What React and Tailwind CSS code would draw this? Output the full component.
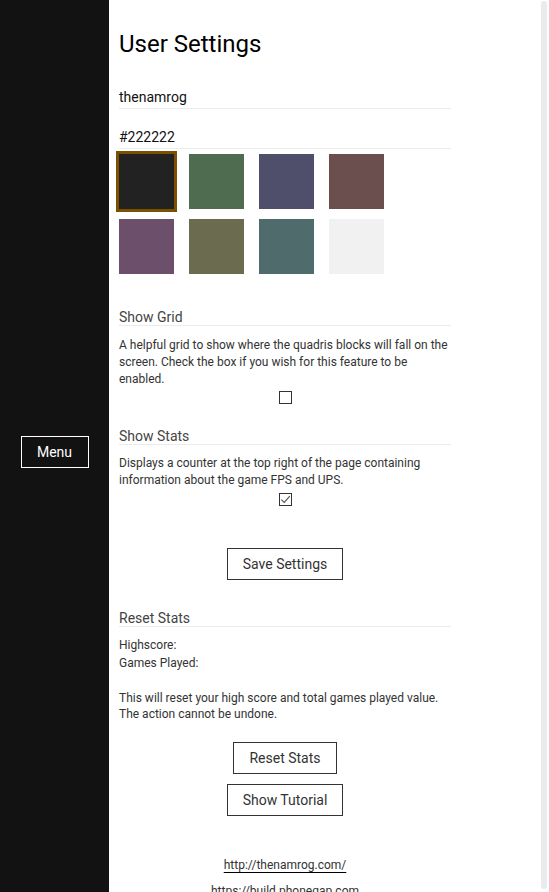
import React from "react";

const swatches = [
  "#222222", "#4f6b50", "#4f4f6b", "#6b4f4f",
  "#6b4f6b", "#6b6b4f", "#4f6b6b", "#f1f1f1",
];

function Heading({ children, className = "" }) {
  return (
    <div className={"text-[14px] leading-[17px] text-[#444] border-b border-[#ebebeb] " + className}>
      <span className="relative top-[1px]">{children}</span>
    </div>
  );
}

function Button({ children, className = "" }) {
  return (
    <button className={"h-[32px] px-[15px] border border-[#333] bg-white text-[14px] leading-[17px] text-[#333] " + className}>
      {children}
    </button>
  );
}

export default function App() {
  return (
    <div className="relative flex h-[892px] w-full overflow-hidden bg-white" style={{ fontFamily: "Roboto, 'Liberation Sans', sans-serif" }}>
      <aside className="w-[109px] shrink-0 bg-[#121212] flex items-center justify-center">
        <button className="mt-[12px] w-[68px] h-[32px] border border-white text-white text-[14px] leading-[17px]">
          Menu
        </button>
      </aside>

      <main className="ml-[10px] w-[332px] flex flex-col">
        <h1 className="mt-[30px] text-[24px] leading-[28px] text-black font-normal">User Settings</h1>

        <div className="mt-[30px] text-[14px] leading-[17px] text-[#111] pb-[3px] border-b border-[#ebebeb]">
          <span className="relative top-[1px]">thenamrog</span>
        </div>
        <div className="mt-[19px] text-[14px] leading-[17px] text-[#111] pb-[3px] border-b border-[#ebebeb]">
          <span className="relative top-[1px]">#222222</span>
        </div>

        <div className="mt-[5px] grid grid-cols-[repeat(4,55px)] gap-x-[15px] gap-y-[10px]">
          {swatches.map((c, i) => (
            <div
              key={c}
              className={"w-[55px] h-[55px] " + (i === 0 ? "shadow-[0_0_0_3px_#7b5000]" : "")}
              style={{ backgroundColor: c }}
            />
          ))}
        </div>

        <Heading className="mt-[34px]">Show Grid</Heading>
        <p className="relative top-[1px] mt-[10px] text-[12px] leading-[17px] text-[#333]">
          A helpful grid to show where the quadris blocks will fall on the screen. Check the box if you wish for this feature to be enabled.
        </p>
        <div className="mt-[4px] flex justify-center">
          <div className="w-[13px] h-[13px] border border-[#333] bg-white" />
        </div>

        <Heading className="mt-[23px]">Show Stats</Heading>
        <p className="mt-[10px] text-[12px] leading-[17px] text-[#333]">
          Displays a counter at the top right of the page containing information about the game FPS and UPS.
        </p>
        <div className="mt-[4px] flex justify-center">
          <div className="w-[13px] h-[13px] border border-[#333] bg-white flex items-center justify-center">
            <svg width="11" height="11" viewBox="0 0 11 11">
              <path d="M1.3 5.6 L4.2 8.4 L9.8 2.2" fill="none" stroke="#555" strokeWidth="1.15" />
            </svg>
          </div>
        </div>

        <div className="mt-[42px] flex justify-center">
          <Button>Save Settings</Button>
        </div>

        <Heading className="mt-[29px]">Reset Stats</Heading>
        <div className="mt-[10px] text-[12px] leading-[17.5px] text-[#333]">
          <div>Highscore:</div>
          <div>Games Played:</div>
        </div>
        <p className="mt-[17px] text-[12px] leading-[17px] text-[#333]">
          <span className="relative top-[1px]">This will reset your high score and total games played value.</span>
          <br />
          The action cannot be undone.
        </p>

        <div className="mt-[19px] flex flex-col items-center gap-[10px]">
          <Button>Reset Stats</Button>
          <Button>Show Tutorial</Button>
        </div>

        <div className="mt-[41px] flex flex-col items-center text-[12px] leading-[17px] text-[#333]">
          <a className="underline decoration-black underline-offset-[3px]">http://thenamrog.com/</a>
          <a className="mt-[9px] underline decoration-black underline-offset-[3px]">https://build.phonegap.com</a>
        </div>
      </main>

      <div className="absolute right-[2px] top-[1px] w-[6px] h-[888px] rounded-[3px] bg-[#ebebeb]" />
    </div>
  );
}
